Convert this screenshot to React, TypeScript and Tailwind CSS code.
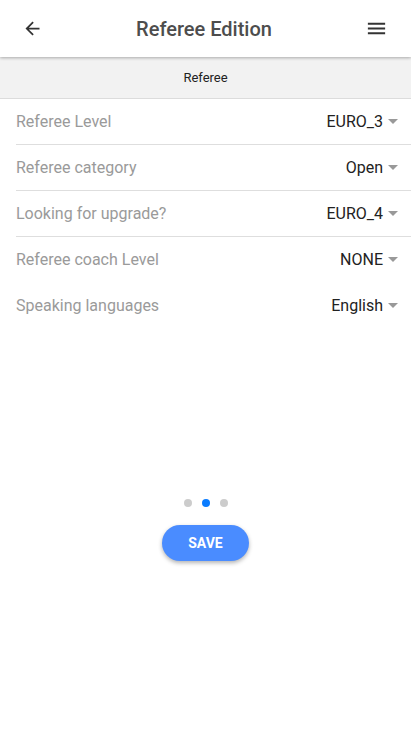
import React from 'react';

const rows = [
    { label: 'Referee Level', value: 'EURO_3', divider: true },
    { label: 'Referee category', value: 'Open', divider: true },
    { label: 'Looking for upgrade?', value: 'EURO_4', divider: true },
    { label: 'Referee coach Level', value: 'NONE', divider: false },
    { label: 'Speaking languages', value: 'English', divider: false },
];

function Caret() {
    return (
        <svg width="10" height="5" viewBox="0 0 10 5" className="ml-[5px]">
            <path d="M0 0 L10 0 L5 5 Z" fill="#999" />
        </svg>
    );
}

export default function App() {
    return (
        <div className="w-[411px] h-[731px] bg-white flex flex-col font-['Roboto',sans-serif]">
            {/* Toolbar */}
            <div className="relative z-10 h-[57px] flex items-center justify-between pl-[22px] pr-[23px] bg-white shadow-[0_1px_3px_rgba(0,0,0,0.3)]">
                <svg width="21" height="21" viewBox="0 0 24 24">
                    <path d="M20 11H7.83l5.59-5.59L12 4l-8 8 8 8 1.41-1.41L7.83 13H20v-2z" fill="#333" />
                </svg>
                <span className="text-[20px] text-[#4d4d4d] font-medium">Referee Edition</span>
                <svg width="23" height="23" viewBox="0 0 24 24">
                    <path d="M3 18h18v-2H3v2zm0-5h18v-2H3v2zm0-7v2h18V6H3z" fill="#333" />
                </svg>
            </div>

            {/* Section header */}
            <div className="h-[42px] flex items-center justify-center bg-[#f2f2f2] border-b border-[#dcdcdc]">
                <span className="text-[13px] text-[#222]">Referee</span>
            </div>

            {/* Form rows */}
            <div className="pl-[16px]">
                {rows.map((row) => (
                    <div
                        key={row.label}
                        className={
                            row.divider
                                ? 'h-[46px] flex items-center justify-between pr-[13px] border-b border-[#dedede]'
                                : 'h-[46px] flex items-center justify-between pr-[13px] border-b border-transparent'
                        }
                    >
                        <span className="text-[16px] text-[#9a9a9a]">{row.label}</span>
                        <span className="flex items-center text-[16px] text-[#222]">
                            {row.value}
                            <Caret />
                        </span>
                    </div>
                ))}
            </div>

            {/* Pager dots */}
            <div className="mt-[170px] flex justify-center gap-[10px]">
                <span className="w-[8px] h-[8px] rounded-full bg-[#cccccc]" />
                <span className="w-[8px] h-[8px] rounded-full bg-[#0a7cff]" />
                <span className="w-[8px] h-[8px] rounded-full bg-[#cccccc]" />
            </div>

            <div className="mt-[18px] flex justify-center">
                <button className="w-[87px] h-[36px] rounded-full bg-[#4a8cff] text-white text-[14px] font-bold shadow-[0_2px_4px_rgba(0,0,0,0.3)]">
                    SAVE
                </button>
            </div>
        </div>
    );
}
